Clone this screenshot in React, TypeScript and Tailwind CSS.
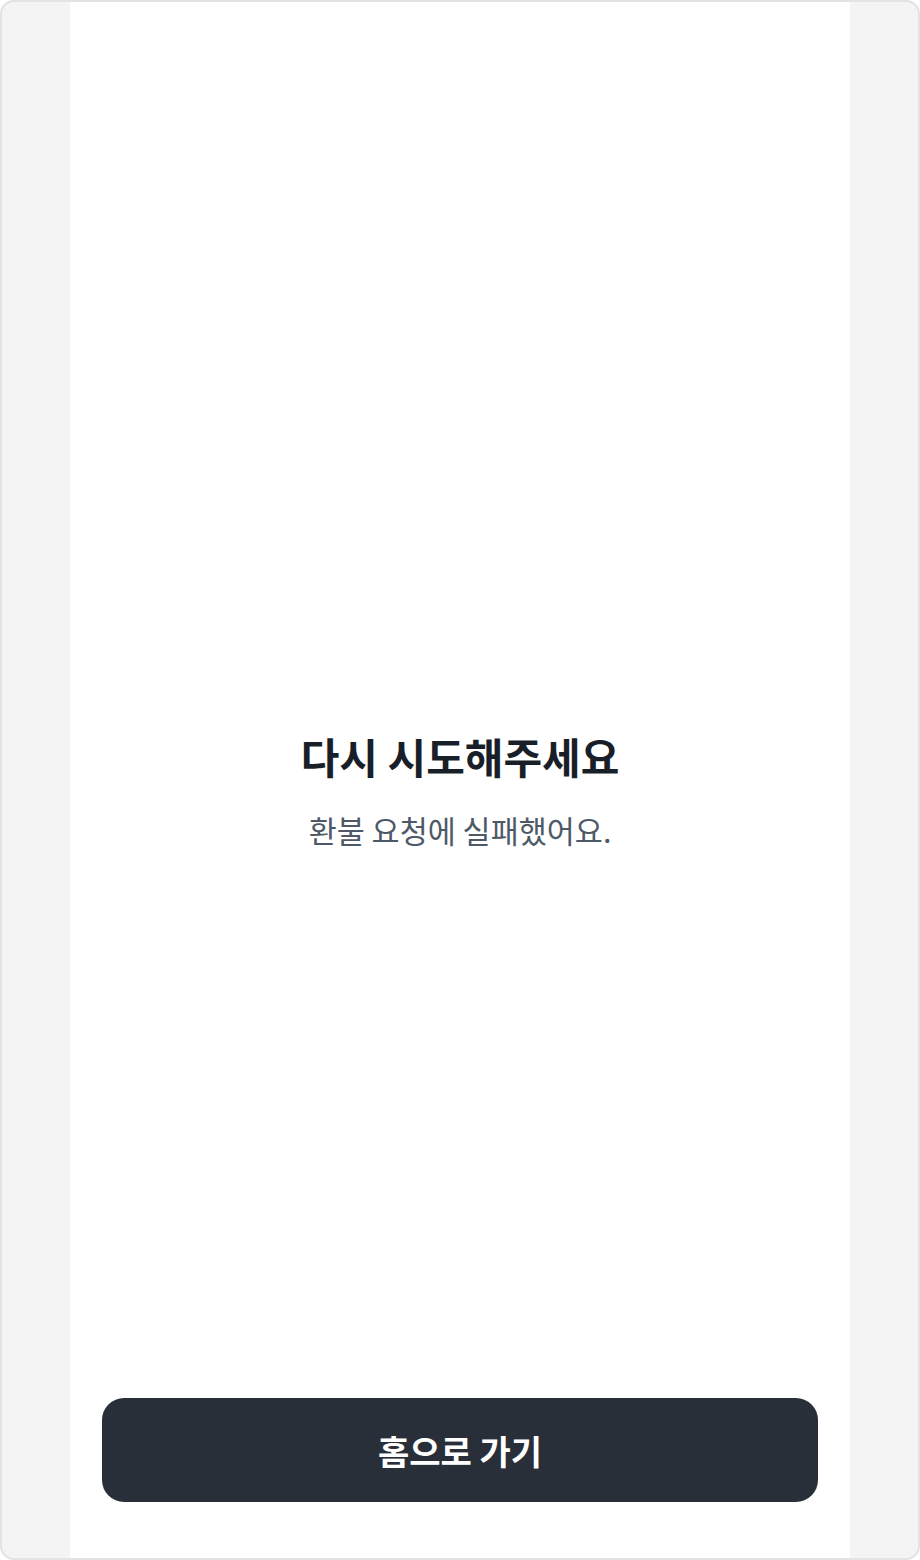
const App = () => {
    return (
        <div className="w-[920px] h-[1560px] bg-[#f4f4f4] border-2 border-[#e3e3e3] rounded-[14px] overflow-hidden flex justify-center" style={{ fontFamily: '"Noto Sans CJK KR", "Noto Sans", sans-serif' }}>
            <section className="w-[780px] h-full bg-white flex flex-col">
                <div className="flex-1 flex flex-col items-center justify-center pt-[180px]">
                    <h1 className="text-[42px] leading-[56px] font-bold text-[#191f28]">다시 시도해주세요</h1>
                    <p className="mt-[24px] text-[30.5px] leading-[44px] text-[#4e5968]">환불 요청에 실패했어요.</p>
                </div>
                <div className="px-8 pb-[56px]">
                    <button className="w-full h-[104px] rounded-[22px] bg-[#292f38] text-white text-[34px] font-bold">
                        홈으로 가기
                    </button>
                </div>
            </section>
        </div>
    )
}

export default App
